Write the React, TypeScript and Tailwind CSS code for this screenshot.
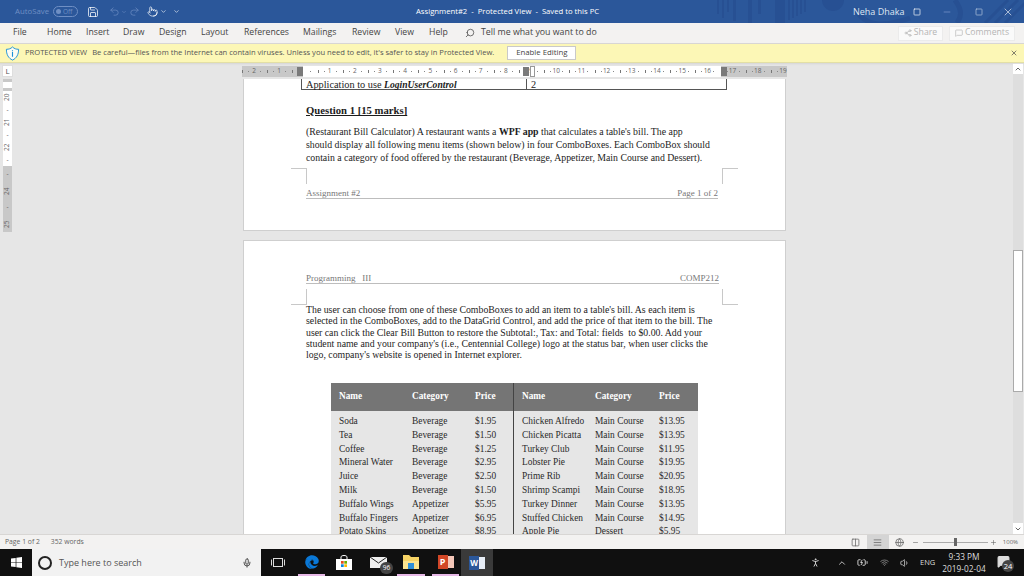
import React from "react";
import {
  ChevronUp,
  ChevronDown,
  Search,
  Share2,
  MessageSquare,
  Mic,
  Wifi,
  Volume1,
  X,
  Minus,
  Plus,
  Undo2,
  Redo2,
  Save,
  Pointer,
  BatteryCharging,
  PersonStanding,
  Columns2,
  AlignJustify,
  Globe,
  Square,
} from "lucide-react";
import { FaEdge } from "react-icons/fa";

const serif = "font-['Liberation_Serif',serif]";
const ui = "font-['Open_Sans',sans-serif]";

const tabs = [
  { label: "File", cls: "w-[34px]" },
  { label: "Home", cls: "w-[39px]" },
  { label: "Insert", cls: "w-[37px]" },
  { label: "Draw", cls: "w-[36px]" },
  { label: "Design", cls: "w-[42px]" },
  { label: "Layout", cls: "w-[43px]" },
  { label: "References", cls: "w-[59px]" },
  { label: "Mailings", cls: "w-[49px]" },
  { label: "Review", cls: "w-[43px]" },
  { label: "View", cls: "w-[34px]" },
  { label: "Help", cls: "w-[35px]" },
];

const rows = [
  ["Soda", "Beverage", "$1.95", "Chicken Alfredo", "Main Course", "$13.95"],
  ["Tea", "Beverage", "$1.50", "Chicken Picatta", "Main Course", "$13.95"],
  ["Coffee", "Beverage", "$1.25", "Turkey Club", "Main Course", "$11.95"],
  ["Mineral Water", "Beverage", "$2.95", "Lobster Pie", "Main Course", "$19.95"],
  ["Juice", "Beverage", "$2.50", "Prime Rib", "Main Course", "$20.95"],
  ["Milk", "Beverage", "$1.50", "Shrimp Scampi", "Main Course", "$18.95"],
  ["Buffalo Wings", "Appetizer", "$5.95", "Turkey Dinner", "Main Course", "$13.95"],
  ["Buffalo Fingers", "Appetizer", "$6.95", "Stuffed Chicken", "Main Course", "$14.95"],
  ["Potato Skins", "Appetizer", "$8.95", "Apple Pie", "Dessert", "$5.95"],
];

const rulerCells = [
  { n: "2", bg: "bg-[#c8c8c8]" },
  { n: "1", bg: "bg-[#c8c8c8]" },
  { n: "", bg: "bg-[linear-gradient(90deg,#c8c8c8_11px,#ffffff_11px)]" },
  { n: "1" }, { n: "2" }, { n: "3" }, { n: "4" }, { n: "5" }, { n: "6" }, { n: "7" },
  { n: "8" }, { n: "9" }, { n: "10" }, { n: "11" }, { n: "12" }, { n: "13" }, { n: "14" },
  { n: "15" }, { n: "16" },
  { n: "17", bg: "bg-[#c8c8c8]" },
  { n: "18", bg: "bg-[#c8c8c8]" },
  { n: "19", bg: "bg-[#c8c8c8]" },
];

function RulerCell({ n, bg }: { n: string; bg?: string }) {
  return (
    <div className={`w-[25.2px] shrink-0 h-full flex items-center text-[6.5px] text-[#666] ${bg ?? "bg-white"}`}>
      <span className="w-[6px] flex"><span className="w-px h-[3px] bg-[#777]" /></span>
      <span className="w-[3px] flex"><span className="w-px h-px bg-[#888]" /></span>
      <span className="w-[6px] flex justify-center leading-none whitespace-nowrap">{n}</span>
      <span className="w-[3px]" />
      <span className="w-[3px] flex"><span className="w-px h-px bg-[#888]" /></span>
    </div>
  );
}

function Corner({ side, bottom }: { side: "left" | "right"; bottom?: boolean }) {
  return (
    <div
      className={`w-[16px] h-[16px] border-[#c8c8c8] ${side === "left" ? "border-r" : "border-l"} ${
        bottom ? "border-b" : "border-t"
      }`}
    />
  );
}

function TableRow({ cells }: { cells: string[] }) {
  return (
    <div className="flex h-[13.8px] items-center text-[9.4px] text-[#2a2a2a] whitespace-nowrap">
      <span className="w-[73px] pl-[8px] box-content">{cells[0]}</span>
      <span className="w-[63px]">{cells[1]}</span>
      <span className="w-[47px]">{cells[2]}</span>
      <span className="w-[73px]">{cells[3]}</span>
      <span className="w-[64px]">{cells[4]}</span>
      <span>{cells[5]}</span>
    </div>
  );
}

export default function App() {
  return (
    <div className={`w-[1024px] h-[576px] overflow-hidden flex flex-col bg-[#e6e6e6] ${ui}`}>
      {/* Title bar */}
      <div className="relative h-[23px] bg-[#2b579a] flex items-center text-white shrink-0 overflow-hidden">
        <svg className="absolute left-[700px] top-0" width="324" height="23" viewBox="0 0 324 23" fill="#275093">
          <rect x="17" y="0" width="2" height="14" />
          <rect x="22" y="0" width="2" height="18" />
          <rect x="27" y="0" width="2" height="12" />
          <rect x="33" y="0" width="3" height="21" />
          <rect x="48" y="0" width="4" height="23" />
          <rect x="58" y="0" width="3" height="14" />
          <rect x="75" y="0" width="10" height="23" />
          <rect x="88" y="0" width="2" height="20" />
          <rect x="92" y="0" width="2" height="18" />
          <rect x="96" y="0" width="2" height="16" />
          <rect x="100" y="0" width="2" height="14" />
          <rect x="104" y="0" width="2" height="12" />
          <circle cx="133" cy="0" r="11" />
          <path d="M155 8 C165 30 190 25 210 18 M255 0 C262 10 262 16 257 23" fill="none" stroke="#275093" strokeWidth="5" />
          <path d="M285 23 L308 0 M295 23 L318 0 M305 23 L328 0" stroke="#275093" strokeWidth="3" />
        </svg>
        <div className="relative w-full flex items-center">
          <span className="ml-[15px] text-[7.8px] text-[#6f8fc4]">AutoSave</span>
          <span className="ml-[4px] w-[25px] h-[11px] rounded-full border border-[#6f8fc4] flex items-center gap-[2px] pl-[2px] text-[6.5px] text-[#6f8fc4]">
            <span className="w-[5px] h-[5px] rounded-full bg-[#6f8fc4]" />
            Off
          </span>
          <Save size={12} strokeWidth={1.5} className="ml-[9px]" />
          <Undo2 size={11} strokeWidth={1.5} className="ml-[10px] text-[#6f8fc4]" />
          <ChevronDown size={6} className="ml-[1px] text-[#6f8fc4]" />
          <Redo2 size={11} strokeWidth={1.5} className="ml-[2px] text-[#6f8fc4]" />
          <Pointer size={11} strokeWidth={1.5} className="ml-[7px]" />
          <ChevronDown size={7} className="ml-[2px]" />
          <ChevronDown size={7} className="ml-[6px]" />
          <span className="absolute left-[416px] text-[7.7px] whitespace-pre">Assignment#2  -  Protected View  -  Saved to this PC</span>
          <span className="absolute left-[853px] text-[9px] text-[#dfe6f2]">Neha Dhaka</span>
          <Square size={8} className="absolute left-[913px]" />
          <Minus size={10} className="absolute left-[942px] text-[#6f8fc4]" />
          <Square size={8} className="absolute left-[975px] text-[#b8c8e0]" />
          <X size={12} strokeWidth={1.2} className="absolute left-[1002px]" />
        </div>
      </div>

      {/* Ribbon tabs */}
      <div className="h-[21px] bg-[#f3f2f1] border-b border-[#d8d6d4] flex items-center pl-[13px] text-[8.7px] text-[#444] shrink-0">
        {tabs.map((t) => (
          <span key={t.label} className={t.cls}>{t.label}</span>
        ))}
        <Search size={10} className="ml-[1px] -scale-x-100 text-[#555]" />
        <span className="ml-[6px] text-[8.8px]">Tell me what you want to do</span>
        <div className="ml-auto mr-[9px] flex gap-[6px] text-[#b5b5b5] text-[8.7px]">
          <div className="w-[45px] h-[15px] bg-[#fafafa] border border-[#ebebeb] flex items-center justify-center gap-[2px]">
            <Share2 size={8} />Share
          </div>
          <div className="w-[66px] h-[15px] bg-[#fafafa] border border-[#ebebeb] flex items-center justify-center gap-[2px]">
            <MessageSquare size={8} />Comments
          </div>
        </div>
      </div>

      {/* Protected view bar */}
      <div className="h-[19px] bg-[#fcf7b6] border-b border-[#e3dfa5] flex items-center pl-[5px] text-[7.6px] text-[#555] shrink-0">
        <svg width="15" height="15" viewBox="0 0 16 16" fill="none" stroke="#1b8fd8" strokeWidth="1">
          <path d="M8 1 C10 3 12 3.500 14.500 3.500 C14.500 9 12.500 13 8 15 C3.500 13 1.500 9 1.500 3.500 C4 3.500 6 3 8 1 Z" fill="#fdfdf4" />
          <path d="M8 6.500 V11.500 M8 4.500 V5.500" strokeWidth="1.2" />
        </svg>
        <span className="ml-[5px] whitespace-pre">PROTECTED VIEW</span>
        <span className="ml-[5px] whitespace-pre">Be careful—files from the Internet can contain viruses. Unless you need to edit, it's safer to stay in Protected View.</span>
        <div className="ml-[13px] w-[69px] h-[14px] bg-white border border-[#c9c9c9] flex items-center justify-center text-[7.8px] text-[#444]">Enable Editing</div>
        <X size={8} strokeWidth={2} className="ml-auto mr-[6px] text-[#444]" />
      </div>

      {/* Ruler row */}
      <div className="h-[16px] flex shrink-0 bg-[#e6e6e6] shadow-[inset_0_2px_2px_-1px_#d6d6d6]">
        <div className="ml-[2px] mt-[2px] w-[11px] h-[12px] bg-white border border-[#dedede] flex items-center justify-center text-[8px] leading-none text-[#555]">L</div>
        <div className="relative ml-[229px] mt-[3px] w-[545px] h-[11px] flex overflow-hidden">
          {rulerCells.map((c, i) => (
            <RulerCell key={i} n={c.n} bg={c.bg} />
          ))}
          <span className="absolute left-[55px] top-[1px] w-[6px] h-[9px] bg-[#7a7a7a]" />
          <span className="absolute left-[281px] top-[1px] w-[6px] h-[9px] bg-[#7a7a7a]" />
          <span className="absolute left-[288px] top-0 w-[5px] h-[11px] bg-white border border-[#999]" />
          <span className="absolute left-[479px] top-[1px] w-[6px] h-[9px] bg-[#7a7a7a]" />
        </div>
        <div className="ml-auto mr-px w-[10px] h-full bg-[#dedede]">
          <div className="mt-px h-[10px] bg-white flex items-center justify-center">
            <ChevronUp size={8} strokeWidth={3} className="text-[#666]" />
          </div>
        </div>
      </div>

      {/* Document area */}
      <div className="flex-1 min-h-0 flex bg-[#e6e6e6] overflow-hidden">
        <div className="ml-[3px] w-[9px] h-[153px] flex flex-col text-[6.5px] leading-none text-[#666] items-center">
          <div className="w-full h-[3px] bg-[#c8c8c8]" />
          <div className="w-full h-[6px] bg-white" />
          <div className="w-full h-[3px] bg-[#c8c8c8]" />
          <div className="w-full h-[75px] bg-white flex flex-col items-center justify-around">
            <span className="-rotate-90">20</span><span>-</span>
            <span className="-rotate-90">21</span><span>-</span>
            <span className="-rotate-90">22</span><span>-</span>
          </div>
          <div className="w-full flex-1 bg-[#c8c8c8] flex flex-col items-center justify-around">
            <span>-</span><span className="-rotate-90">24</span><span>-</span>
            <span className="-rotate-90">25</span>
          </div>
        </div>

        <div className={`ml-[231px] w-[543px] flex flex-col gap-[9px] text-[#1c1c1c] ${serif}`}>
          {/* Page 1 */}
          <div className="h-[152px] bg-white border-b border-x border-[#cfcfcf] shrink-0 px-[62px]">
            <div className="w-[426px] -ml-[5px] h-[11px] flex border-x border-b border-[#555] text-[10.3px] leading-[11px]">
              <div className="w-[225px] pl-[4px] border-r border-[#555] whitespace-nowrap">
                Application to use <b><i className="text-[9.6px]">LoginUserControl</i></b>
              </div>
              <div className="pl-[4px]">2</div>
            </div>
            <p className="mt-[14px] text-[10.7px] leading-[12px] font-bold underline">Question 1 [15 marks]</p>
            <p className="mt-[10px] text-[9.8px] leading-[12.8px] whitespace-pre">
              (Restaurant Bill Calculator) A restaurant wants a <b>WPF app</b> that calculates a table's bill. The app<br />
              should display all following menu items (shown below) in four ComboBoxes. Each ComboBox should<br />
              contain a category of food offered by the restaurant (Beverage, Appetizer, Main Course and Dessert).
            </p>
            <div className="-mx-[15px] mt-[4px] flex justify-between">
              <Corner side="left" />
              <Corner side="right" />
            </div>
            <div className="mt-[5px] mr-[5px] flex justify-between border-b border-[#bdbdbd] text-[9px] leading-[9px] text-[#777]">
              <span>Assignment #2</span>
              <span>Page 1 of 2</span>
            </div>
          </div>

          {/* Page 2 */}
          <div className="flex-1 min-h-0 bg-white border-t border-x border-[#cfcfcf] px-[62px] overflow-hidden">
            <div className="mt-[32px] mr-[4px] flex justify-between border-b border-[#bdbdbd] text-[9px] leading-[10px] text-[#777]">
              <span className="whitespace-pre">Programming   III</span>
              <span>COMP212</span>
            </div>
            <div className="-mx-[15px] mt-[5px] flex justify-between">
              <Corner side="left" bottom />
              <Corner side="right" bottom />
            </div>
            <p className="-mt-px text-[9.8px] leading-[11.25px] whitespace-pre">
              The user can choose from one of these ComboBoxes to add an item to a table's bill. As each item is<br />
              selected in the ComboBoxes, add to the DataGrid Control, and add the price of that item to the bill. The<br />
              user can click the Clear Bill Button to restore the Subtotal:, Tax: and Total: fields  to $0.00. Add your<br />
              student name and your company's (i.e., Centennial College) logo at the status bar, when user clicks the<br />
              logo, company's website is opened in Internet explorer.
            </p>
            <div className="mt-[23px] ml-[25px] w-[367px] bg-[#e6e6e6] relative">
              <div className="h-[28px] bg-[#757575] flex items-center text-[9.3px] font-bold text-white">
                <span className="w-[73px] pl-[8px] box-content">Name</span>
                <span className="w-[63px]">Category</span>
                <span className="w-[47px]">Price</span>
                <span className="w-[73px]">Name</span>
                <span className="w-[64px]">Category</span>
                <span>Price</span>
              </div>
              <div className="pt-[3px] pb-[8px]">
                {rows.map((r) => (
                  <TableRow key={r[0]} cells={r} />
                ))}
              </div>
              <div className="absolute left-[182px] top-0 bottom-0 w-px bg-[#444]" />
            </div>
          </div>
        </div>

        {/* Scrollbar */}
        <div className="ml-auto mr-px w-[10px] flex flex-col bg-[#dedede]">
          <div className="h-[171px]" />
          <div className="h-[142px] bg-white border border-[#aaaaaa]" />
          <div className="flex-1" />
          <div className="h-[11px] bg-white flex items-center justify-center">
            <ChevronDown size={8} strokeWidth={3} className="text-[#666]" />
          </div>
        </div>
      </div>

      {/* Status bar */}
      <div className="h-[15px] bg-[#f3f2f1] border-t border-[#d8d6d4] flex items-center pl-[5px] text-[6.8px] text-[#666] shrink-0">
        <span>Page 1 of 2</span>
        <span className="ml-[11px] w-[33px]">352 words</span>
        <Columns2 size={9} className="ml-[767px] shrink-0" />
        <div className="ml-[7px] w-[22px] h-full bg-[#d4d4d4] flex items-center justify-center shrink-0">
          <AlignJustify size={9} />
        </div>
        <Globe size={9} className="ml-[6px] shrink-0" />
        <Minus size={7} className="ml-[8px] shrink-0" />
        <div className="ml-[4px] w-[65px] h-px bg-[#aaa] flex items-center justify-center shrink-0">
          <span className="w-[3px] h-[8px] bg-[#666]" />
        </div>
        <Plus size={7} className="ml-[2px] shrink-0" />
        <span className="ml-[6px] text-[6px]">100%</span>
      </div>

      {/* Taskbar */}
      <div className="h-[27px] bg-[#101010] flex items-center text-white shrink-0">
        <div className="w-[32px] flex justify-center">
          <svg width="11" height="11" viewBox="0 0 16 16" fill="#fff">
            <path d="M0 2.300 L6.800 1.300 V7.500 H0 Z M7.800 1.200 L16 0 V7.500 H7.800 Z M0 8.500 H6.800 V14.700 L0 13.700 Z M7.800 8.500 H16 V16 L7.800 14.800 Z" />
          </svg>
        </div>
        <div className="w-[229px] h-full bg-[#f2f2f2] flex items-center pl-[6px] text-[#555] text-[9px]">
          <span className="w-[14px] h-[14px] rounded-full border-2 border-[#222]" />
          <span className="ml-[7px]">Type here to search</span>
          <Mic size={10} className="ml-auto mr-[9px] text-[#333]" />
        </div>
        <svg className="ml-[10px]" width="14" height="11" viewBox="0 0 14 11" fill="none" stroke="#ddd">
          <rect x="2.500" y="1.500" width="9" height="8" />
          <path d="M0.500 2.500 V8.500 M13.500 2.500 V8.500" />
        </svg>
        <div className="ml-[13px] w-[27px] h-full flex items-center justify-center border-b-2 border-[#e6b8e6]">
          <FaEdge size={14} className="text-[#0a78d7]" />
        </div>
        <div className="w-[38px] h-full flex items-center justify-center">
          <svg width="16" height="15" viewBox="0 0 16 15">
            <path d="M5 4 V2 C5 0 11 0 11 2 V4" fill="none" stroke="#fff" />
            <rect x="0" y="4" width="16" height="11" fill="#fff" />
            <rect x="5" y="6" width="2.700" height="2.700" fill="#e74c1c" />
            <rect x="8.300" y="6" width="2.700" height="2.700" fill="#6fb000" />
            <rect x="5" y="9.300" width="2.700" height="2.700" fill="#0a84e0" />
            <rect x="8.300" y="9.300" width="2.700" height="2.700" fill="#ffb900" />
          </svg>
        </div>
        <div className="relative w-[34px] h-full flex items-center pl-[7px]">
          <svg width="17" height="11" viewBox="0 0 17 11">
            <rect width="17" height="11" fill="#eee" />
            <path d="M0 0 L8.500 6 L17 0" fill="none" stroke="#222" />
          </svg>
          <span className="absolute left-[17px] top-[13px] w-[13px] h-[12px] rounded-full bg-[#444] text-[6.5px] leading-[12px] text-center">96</span>
        </div>
        <div className="w-[28px] h-full flex items-center justify-center border-b-2 border-[#e6b8e6]">
          <svg width="16" height="14" viewBox="0 0 16 14">
            <path d="M0 0 H6 L8 2 H16 V14 H0 Z" fill="#f6d365" />
            <rect x="0" y="6" width="16" height="8" fill="#fbe38e" />
            <rect x="5" y="8" width="6" height="6" fill="#2f8fd8" />
          </svg>
        </div>
        <div className="ml-[7px] w-[27px] h-full flex items-center justify-center border-b-2 border-[#e6b8e6]">
          <div className="w-[10px] h-[14px] bg-[#d24726] text-[9px] font-bold leading-[14px] text-center">P</div>
          <div className="w-[6px] h-[12px] bg-[#f4c7b8]" />
        </div>
        <div className="ml-[2px] w-[32px] h-full bg-[#3a3a3a] flex items-center justify-center">
          <div className="w-[10px] h-[14px] bg-[#2b579a] text-[8px] font-bold leading-[14px] text-center">W</div>
          <div className="w-[6px] h-[12px] bg-[#e8eef7]" />
        </div>

        <PersonStanding size={11} className="ml-[317px] text-[#ddd]" />
        <ChevronUp size={10} className="ml-[16px] text-[#ddd]" />
        <BatteryCharging size={11} className="ml-[10px] text-[#ddd]" />
        <Wifi size={9} className="ml-[12px] text-[#999]" />
        <Volume1 size={10} className="ml-[11px] text-[#ccc]" />
        <span className="ml-[10px] w-[15px] text-[7.5px] text-[#ddd]">ENG</span>
        <div className="ml-[8px] w-[42px] flex flex-col items-center text-[8.3px] leading-[12px] text-[#ddd] whitespace-nowrap">
          <span>9:33 PM</span>
          <span>2019-02-04</span>
        </div>
        <div className="relative ml-[12px] w-[16px] h-[16px]">
          <MessageSquare size={13} fill="#ddd" className="text-[#ddd]" />
          <span className="absolute left-[5px] top-[5px] w-[12px] h-[12px] rounded-full bg-[#444] text-[7.5px] leading-[12px] text-center">24</span>
        </div>
      </div>
    </div>
  );
}
